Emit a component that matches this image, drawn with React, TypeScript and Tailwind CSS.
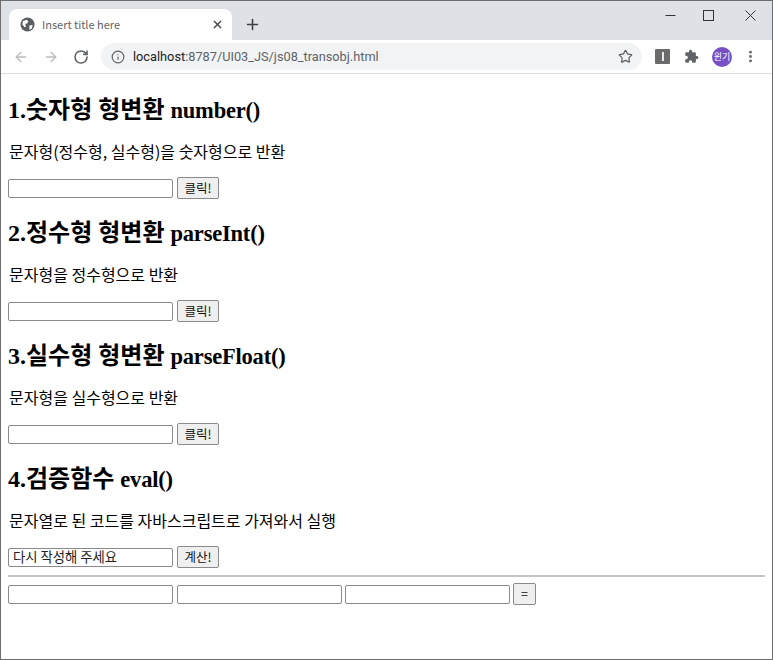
import { Plus, X, ArrowLeft, ArrowRight, RotateCw, Info, Star, MoreVertical } from 'lucide-react';

const sections = [
  { no: '1.', title: '숫자형 형변환', fn: 'number()', desc: '문자형(정수형, 실수형)을 숫자형으로 반환', value: '', btn: '클릭!' },
  { no: '2.', title: '정수형 형변환', fn: 'parseInt()', desc: '문자형을 정수형으로 반환', value: '', btn: '클릭!' },
  { no: '3.', title: '실수형 형변환', fn: 'parseFloat()', desc: '문자형을 실수형으로 반환', value: '', btn: '클릭!' },
  { no: '4.', title: '검증함수', fn: 'eval()', desc: '문자열로 된 코드를 자바스크립트로 가져와서 실행', value: '다시 작성해 주세요', btn: '계산!' },
];

const inputCls =
  "w-[165px] h-[19px] border border-[#8a8a8a] rounded-[2px] bg-white pl-[4px] pr-[2px] pb-[1px] text-[13.33px] leading-[16px] text-[#222] outline-none font-['Noto_Sans_CJK_KR',sans-serif]";
const btnCls =
  "h-[22px] border border-[#8a8a8a] rounded-[2px] bg-[#efefef] text-[12.5px] leading-[18px] text-[#111] font-['Noto_Sans_CJK_KR',sans-serif]";

export default function App() {
  return (
    <div className="w-[773px] h-[660px] flex flex-col overflow-hidden border border-[#6e6e6e] bg-white font-['Liberation_Serif','Noto_Sans_CJK_KR',serif]">
      {/* tab strip */}
      <div className="h-[39px] shrink-0 bg-[#dee1e6] flex items-end pl-[8px] font-['Noto_Sans_CJK_KR',sans-serif]">
        <div className="w-[223px] h-[31px] bg-white rounded-t-[8px] flex items-center pl-[11px] pr-[8px]">
          <svg width="15" height="15" viewBox="0 0 16 16">
            <circle cx="8" cy="8" r="7.5" fill="#5a5d61" />
            <path d="M3 4.5 L7 3 L9 4.5 L7.5 7 L5.5 7.5 L6.5 10 L5 11 L2.5 8 Z" fill="#ffffff" />
            <path d="M10 9 L13.5 8.5 L12.5 12.5 L10 13.5 Z" fill="#ffffff" />
          </svg>
          <span className="ml-[7px] text-[11px] text-[#5f6368] flex-1">Insert title here</span>
          <X size={13} strokeWidth={2.5} className="text-[#45484c]" />
        </div>
        <div className="h-[31px] ml-[12px] flex items-center">
          <Plus size={17} strokeWidth={2.2} className="text-[#3c4043]" />
        </div>
        <div className="ml-auto self-start flex items-center h-[28px]">
          <svg width="11" height="11" viewBox="0 0 11 11" className="mr-[27px]">
            <path d="M0.5 5.5 H10.5" stroke="#333" strokeWidth="1" />
          </svg>
          <svg width="11" height="11" viewBox="0 0 11 11" className="mr-[31px]">
            <rect x="0.5" y="0.5" width="10" height="10" fill="none" stroke="#333" strokeWidth="1" />
          </svg>
          <svg width="11" height="11" viewBox="0 0 11 11" className="mr-[16px]">
            <path d="M0.5 0.5 L10.5 10.5 M10.5 0.5 L0.5 10.5" stroke="#333" strokeWidth="1" />
          </svg>
        </div>
      </div>
      {/* toolbar */}
      <div className="h-[34px] shrink-0 bg-white border-b border-[#dadce0] flex items-center pl-[12px] font-['Noto_Sans_CJK_KR',sans-serif]">
        <ArrowLeft size={16} strokeWidth={2} className="text-[#babcbe]" />
        <ArrowRight size={16} strokeWidth={2} className="ml-[14px] text-[#babcbe]" />
        <RotateCw size={16} strokeWidth={2.4} className="ml-[14px] text-[#5f6368]" />
        <div className="ml-[12px] w-[541px] h-[27px] rounded-full bg-[#f1f3f4] flex items-center pl-[10px] pr-[9px]">
          <Info size={14} strokeWidth={2} className="text-[#5f6368]" />
          <span className="ml-[8px] text-[12.75px] text-[#5f6368] font-['Roboto',sans-serif] flex-1">
            <span className="text-[#202124]">localhost</span>:8787/UI03_JS/js08_transobj.html
          </span>
          <Star size={15} strokeWidth={2} className="text-[#5f6368]" />
        </div>
        <div className="ml-[13px] w-[15px] h-[15px] rounded-[1px] bg-[#6b6b6b] flex items-center justify-center">
          <div className="w-[2px] h-[9px] bg-[#e8e8f0]" />
        </div>
        <svg width="15" height="15" viewBox="0 0 24 24" className="ml-[14px]">
          <path
            d="M20.5 11H19V7a2 2 0 0 0-2-2h-4V3.5a2.5 2.5 0 0 0-5 0V5H4a2 2 0 0 0-2 2v3.8h1.5a2.7 2.7 0 0 1 0 5.4H2V20a2 2 0 0 0 2 2h3.8v-1.5a2.7 2.7 0 0 1 5.4 0V22H17a2 2 0 0 0 2-2v-4h1.5a2.5 2.5 0 0 0 0-5z"
            fill="#5f6368"
          />
        </svg>
        <div className="ml-[13px] w-[20px] h-[20px] rounded-full bg-[#7650c4] flex items-center justify-center text-[9px] text-white">
          윈기
        </div>
        <MoreVertical size={15} strokeWidth={2.5} className="ml-[11px] text-[#5f6368]" />
      </div>
      {/* page */}
      <div className="flex-1 px-[7px] pt-[2px] text-black">
        {sections.map((s) => (
          <div key={s.no}>
            <h2 className="mt-[21px] mb-[18px] text-[24px] leading-[27px] font-bold">
              {s.no}
              {s.title} <span className="text-[22.5px] tracking-[-0.2px]">{s.fn}</span>
            </h2>
            <p className="mb-[17px] ml-[1px] leading-[18px] font-['Noto_Sans_CJK_KR',sans-serif] text-[16px]">{s.desc}</p>
            <div className="flex items-center gap-[4px] h-[22px]">
              <input className={inputCls} defaultValue={s.value} />
              <button className={btnCls + ' w-[42px]'}>{s.btn}</button>
            </div>
          </div>
        ))}
        <hr className="mt-[7px] mb-[6px] border-t-2 border-[#c4c4c4]" />
        <div className="flex items-center gap-[3px]">
          <input className={inputCls + ' mr-[1px]'} />
          <input className={inputCls} />
          <input className={inputCls} />
          <button className={btnCls + ' w-[23px]'}>=</button>
        </div>
      </div>
    </div>
  );
}
